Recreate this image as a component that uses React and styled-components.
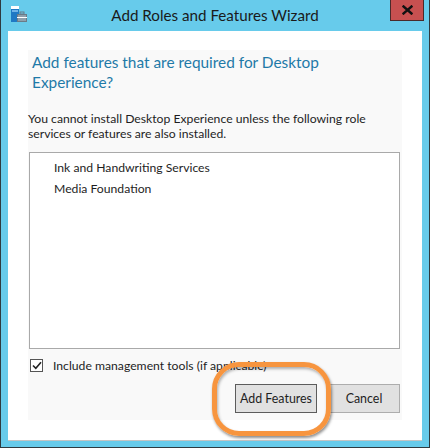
import React from "react";
import styled, { createGlobalStyle } from "styled-components";

const GlobalStyle = createGlobalStyle`
  html, body {
    margin: 0;
    padding: 0;
    background: #ffffff;
  }
  body {
    font-family: Lato, "Noto Sans", sans-serif;
  }
`;

const Window = styled.div`
  position: relative;
  width: 430px;
  height: 448px;
  box-sizing: border-box;
  background: #67cbeb;
  border-left: 1px solid #2e3a40;
  border-right: 1px solid #2e3a40;
  border-bottom: 1px solid #2e3a40;
  display: flex;
  flex-direction: column;
`;

const TitleBar = styled.div`
  position: relative;
  height: 31px;
  flex-shrink: 0;
  display: flex;
  align-items: center;
  justify-content: center;
`;

const AppIcon = styled.div`
  position: absolute;
  left: 9px;
  top: 6px;
  width: 18px;
  height: 17px;
`;

const Title = styled.div`
  font-size: 15.2px;
  color: #1a1a1a;
  padding-bottom: 1px;
`;

const CloseButton = styled.button`
  position: absolute;
  top: 0;
  right: 5px;
  width: 34px;
  height: 21px;
  box-sizing: border-box;
  background: #c75050;
  border: 1px solid #4a2a2a;
  border-top: none;
  padding: 0;
  display: flex;
  align-items: center;
  justify-content: center;
`;

const Client = styled.div`
  flex: 1;
  margin: 0 7px 7px 7px;
  background: #ffffff;
  box-shadow: inset 0 -1px 0 #c4c4c4;
  padding: 19px 20px 21px 20px;
  display: flex;
`;

const Panel = styled.div`
  flex: 1;
  background: #f9f9f9;
  display: flex;
  flex-direction: column;
  padding: 2px 2px 7px 0;
`;

const Heading = styled.h1`
  margin: 0 0 0 4px;
  font-weight: 400;
  font-size: 15.4px;
  line-height: 20px;
  color: #1f7aa8;
`;

const Description = styled.p`
  margin: 19px 0 0 0;
  font-size: 12.2px;
  line-height: 15px;
  color: #1e1e1e;
`;

const ListBox = styled.ul`
  list-style: none;
  margin: 11px 0 0 1px;
  padding: 4px 0 0 24px;
  height: 197px;
  box-sizing: border-box;
  background: #ffffff;
  border: 1px solid #a9a9a9;
`;

const ListItem = styled.li`
  font-size: 12.2px;
  line-height: 21px;
  color: #1e1e1e;
`;

const CheckRow = styled.label`
  margin: 8px 0 0 2px;
  display: flex;
  align-items: center;
  gap: 10px;
  height: 16px;
  font-size: 12.2px;
  color: #1e1e1e;
`;

const CheckBox = styled.span`
  width: 13px;
  height: 13px;
  box-sizing: border-box;
  border: 1px solid #555555;
  background: #ffffff;
  display: flex;
  align-items: center;
  justify-content: center;
`;

const ButtonRow = styled.div`
  margin-top: 11px;
  display: flex;
  justify-content: flex-end;
  gap: 11px;
`;

const ButtonWrap = styled.div`
  position: relative;
`;

const Button = styled.button`
  height: 29px;
  width: ${(p) => p.$width}px;
  box-sizing: border-box;
  background: #e1e1e1;
  border: 1px solid ${(p) => (p.$focused ? "#5c5c5c" : "#adadad")};
  font-family: Lato, "Noto Sans", sans-serif;
  font-size: 12.4px;
  color: #1e1e1e;
  padding: 0;
`;

const Highlight = styled.div`
  position: absolute;
  left: -23px;
  top: -22px;
  right: -14px;
  bottom: -23px;
  border: 5px solid #f7953f;
  border-radius: 27px;
  box-shadow: 1px 2px 3px rgba(0, 0, 0, 0.45),
    inset 1px 2px 3px rgba(0, 0, 0, 0.3);
  pointer-events: none;
`;

const ServerIcon = () => (
  <svg width="18" height="17" viewBox="0 0 18 17">
    <rect x="1" y="0" width="8" height="3" fill="#ffffff" />
    <rect x="1" y="3" width="8" height="13" fill="#1f79c4" />
    <rect x="2" y="4" width="6" height="2" fill="#6fb3e8" />
    <rect x="7" y="8" width="10" height="8" fill="#6b7b88" />
    <rect x="8" y="9" width="8" height="6" fill="#8ea0ad" />
    <rect x="10" y="6" width="4" height="2" fill="none" stroke="#6b7b88" strokeWidth="1" />
    <rect x="7" y="11" width="10" height="1" fill="#ffffff" />
  </svg>
);

const CloseGlyph = () => (
  <svg width="11" height="10" viewBox="0 0 11 10">
    <path d="M1.5 1.5 L9.5 8.5 M9.5 1.5 L1.5 8.5" stroke="#111111" strokeWidth="2.4" strokeLinecap="square" />
  </svg>
);

const CheckGlyph = () => (
  <svg width="10" height="9" viewBox="0 0 10 9">
    <path d="M1 4.5 L3.8 7.3 L9 1.2" fill="none" stroke="#222222" strokeWidth="1.6" />
  </svg>
);

const App = () => {
  const items = ["Ink and Handwriting Services", "Media Foundation"];
  return (
    <>
      <GlobalStyle />
      <Window>
        <TitleBar>
          <AppIcon>
            <ServerIcon />
          </AppIcon>
          <Title>Add Roles and Features Wizard</Title>
          <CloseButton aria-label="Close">
            <CloseGlyph />
          </CloseButton>
        </TitleBar>
        <Client>
          <Panel>
            <Heading>
              Add features that are required for Desktop
              <br />
              Experience?
            </Heading>
            <Description>
              You cannot install Desktop Experience unless the following role
              <br />
              services or features are also installed.
            </Description>
            <ListBox>
              {items.map((item) => (
                <ListItem key={item}>{item}</ListItem>
              ))}
            </ListBox>
            <CheckRow>
              <CheckBox>
                <CheckGlyph />
              </CheckBox>
              Include management tools (if applicable)
            </CheckRow>
            <ButtonRow>
              <ButtonWrap>
                <Button $width={82} $focused>
                  Add Features
                </Button>
                <Highlight />
              </ButtonWrap>
              <Button $width={72}>Cancel</Button>
            </ButtonRow>
          </Panel>
        </Client>
      </Window>
    </>
  );
};

export default App;
